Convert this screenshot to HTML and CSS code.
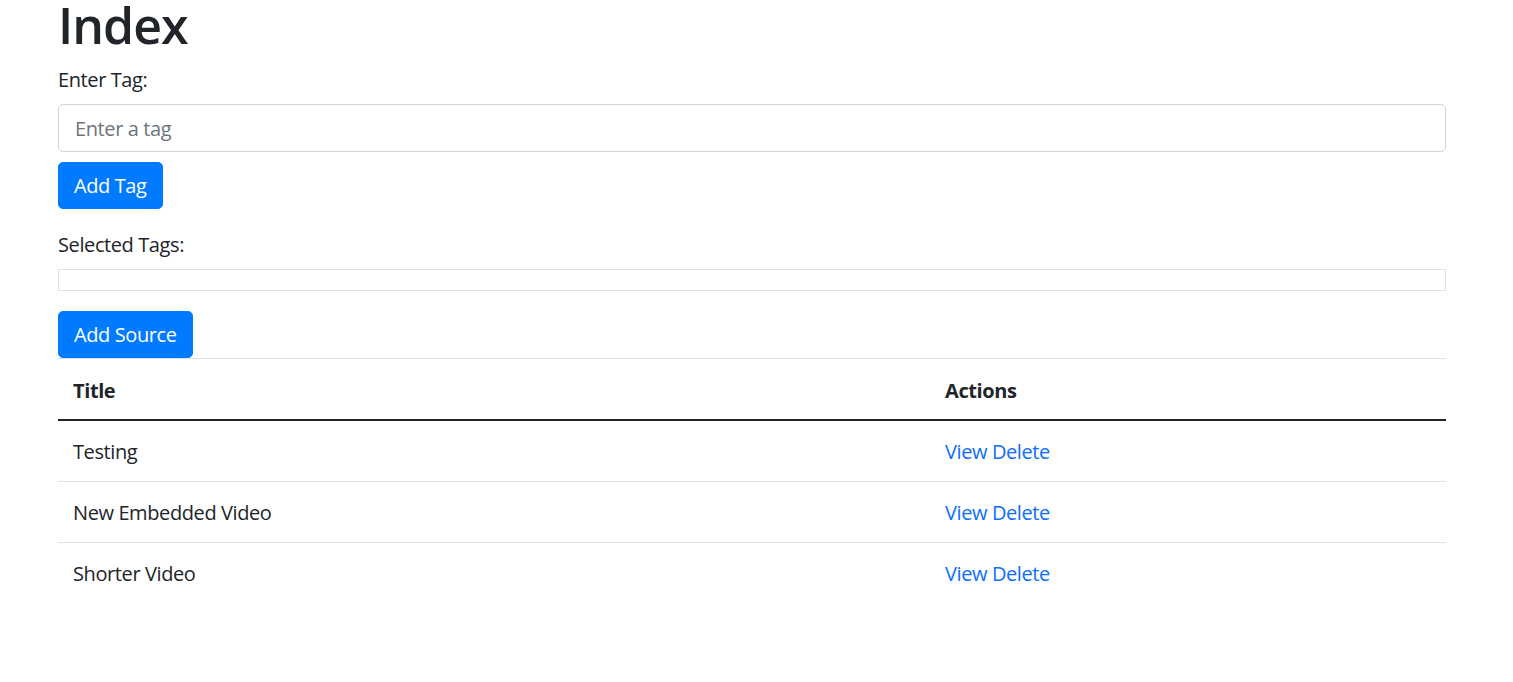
FILE: index.html
```html
<!DOCTYPE html>
<html lang="en">
<head>
<meta charset="utf-8">
<title>Index</title>
<link rel="stylesheet" href="styles.css">
</head>
<body>
<main class="container">
  <h1 class="title">Index</h1>
  <div class="form-group first">
    <label class="label" for="tag">Enter Tag:</label>
    <input class="input" id="tag" type="text" placeholder="Enter a tag">
    <button class="btn" type="button">Add Tag</button>
  </div>
  <div class="form-group">
    <label class="label">Selected Tags:</label>
    <div class="tags"></div>
  </div>
  <button class="btn" type="button">Add Source</button>
  <table class="table">
    <thead>
      <tr><th class="col-title">Title</th><th>Actions</th></tr>
    </thead>
    <tbody>
      <tr><td>Testing</td><td><a href="#">View</a> <a href="#">Delete</a></td></tr>
      <tr><td>New Embedded Video</td><td><a href="#">View</a> <a href="#">Delete</a></td></tr>
      <tr><td>Shorter Video</td><td><a href="#">View</a> <a href="#">Delete</a></td></tr>
    </tbody>
  </table>
</main>
</body>
</html>
```
FILE: styles.css
```css
html, body {
  margin: 0;
  padding: 0;
  background: #fff;
}
body {
  font-family: "Open Sans", "Noto Sans", sans-serif;
  font-size: 20px;
  line-height: 30px;
  letter-spacing: -0.4px;
  color: #212529;
}
.container {
  width: 1388px;
  margin-left: 58px;
}
.title {
  font-size: 50px;
  font-weight: 600;
  line-height: 50px;
  letter-spacing: -1px;
  margin: 0 0 15px;
}
.form-group {
  margin-bottom: 20px;
}
.form-group.first {
  margin-bottom: 21px;
}
.label {
  display: block;
  margin-bottom: 9px;
}
.input {
  display: block;
  box-sizing: border-box;
  width: 100%;
  height: 48px;
  padding: 7px 16px;
  font: inherit;
  letter-spacing: -0.4px;
  color: #495057;
  border: 1px solid #ced4da;
  border-radius: 5px;
  margin-bottom: 10px;
}
.input::placeholder {
  color: #6c757d;
}
.btn {
  display: block;
  height: 47px;
  padding: 0 15px;
  font: inherit;
  letter-spacing: -0.4px;
  color: #fff;
  background: #007bff;
  border: 1px solid #007bff;
  border-radius: 5px;
}
.tags {
  box-sizing: border-box;
  height: 22px;
  border: 1px solid #dee2e6;
}
.table {
  width: 100%;
  border-collapse: collapse;
}
.table th, .table td {
  text-align: left;
  padding: 16px 15px 14px;
  line-height: 30px;
  border-top: 1px solid #dee2e6;
}
.table th {
  font-weight: 700;
  padding: 17px 15px 13px;
  border-bottom: 2px solid #212529;
}
.col-title {
  width: 842px;
}
.table a {
  color: #0d6efd;
  text-decoration: none;
}
```
